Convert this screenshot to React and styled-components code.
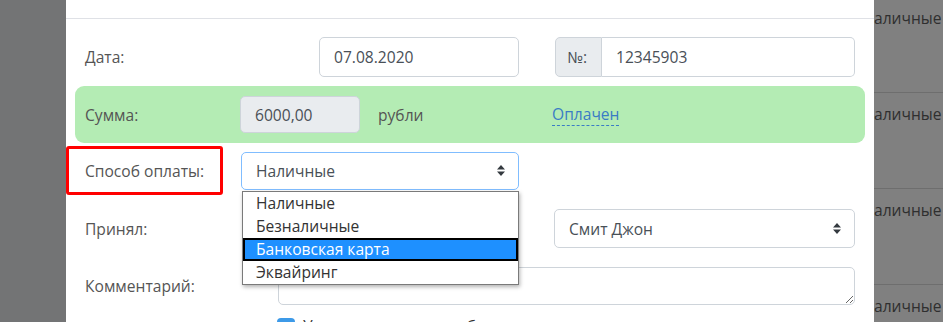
import React from "react";
import styled, { createGlobalStyle } from "styled-components";

const Global = createGlobalStyle`
  html, body { margin: 0; padding: 0; height: 322px; overflow: hidden; background: #808080; }
  body { font-family: "Open Sans", "Noto Sans", sans-serif; font-size: 15.6px; }
  * { box-sizing: border-box; }
`;

const Page = styled.div`
  display: flex;
  align-items: flex-start;
  width: 943px;
  height: 322px;
  overflow: hidden;
`;

const LeftShade = styled.div`
  width: 66px;
  height: 322px;
  flex: none;
  background: #737475;
`;

const RightShade = styled.div`
  flex: 1;
  background: #808080;
  overflow: hidden;
  margin-top: -3px;
`;

const ShadeRow = styled.div`
  height: 96px;
  border-bottom: 1px solid #6e6e6e;
  padding-top: 9px;
  line-height: 24px;
  color: #2f2f2f;
  white-space: nowrap;
`;

const Modal = styled.div`
  width: 808px;
  flex: none;
  background: #fff;
  min-height: 340px;
`;

const Header = styled.div`
  height: 19px;
  border-bottom: 1px solid #dfe1e6;
`;

const Body = styled.div`
  padding: 18px 19px 0 19px;
  display: flex;
  flex-direction: column;
`;

const Row = styled.div`
  display: flex;
  align-items: center;
  margin-top: ${(p) => p.$mt || 0}px;
`;

const Label = styled.div`
  width: ${(p) => p.$w}px;
  flex: none;
  color: #555;
  line-height: 24px;
`;

const Input = styled.div`
  width: ${(p) => (p.$w ? `${p.$w}px` : "auto")};
  flex: ${(p) => (p.$w ? "none" : 1)};
  height: ${(p) => p.$h || 40}px;
  border: 1px solid #ced4da;
  border-radius: 5px;
  background: ${(p) => (p.$disabled ? "#e9ecef" : "#fff")};
  color: #495057;
  display: flex;
  align-items: center;
  padding-left: 14px;
  line-height: 24px;
`;

const Group = styled.div`
  flex: 1;
  display: flex;
  height: 40px;
  margin-left: 36px;
`;

const Addon = styled.div`
  width: 47px;
  flex: none;
  border: 1px solid #ced4da;
  border-radius: 5px 0 0 5px;
  background: #e9ecef;
  color: #495057;
  display: flex;
  align-items: center;
  padding-left: 11px;
`;

const GroupInput = styled(Input)`
  border-left: none;
  border-radius: 0 5px 5px 0;
  padding-left: 14px;
  height: 40px;
`;

const Panel = styled.div`
  margin: 9px -10px 0 -10px;
  background: #b4ecb4;
  border-radius: 9px;
  padding: 10px 10px;
  display: flex;
  align-items: center;
`;

const Plain = styled.div`
  width: ${(p) => p.$w}px;
  flex: none;
  margin-left: ${(p) => p.$ml || 0}px;
  color: #555;
  line-height: 24px;
`;

const StatusLink = styled.span`
  color: #3a7cc5;
  border-bottom: 1px dashed #3a7cc5;
  line-height: 21px;
  display: inline-block;
`;

const MarkedLabel = styled.div`
  width: 157px;
  height: 49px;
  flex: none;
  margin-left: -19px;
  border: 3px solid #ff0000;
  border-radius: 3px;
  padding-left: 16px;
  display: flex;
  align-items: center;
  color: #555;
`;

const SelectWrap = styled.div`
  position: relative;
  width: ${(p) => (p.$w ? `${p.$w}px` : "auto")};
  flex: ${(p) => (p.$w ? "none" : 1)};
  margin-left: ${(p) => p.$ml || 0}px;
`;

const SelectBox = styled.div`
  height: ${(p) => p.$h}px;
  border: 1px solid ${(p) => (p.$focus ? "#80bdff" : "#ced4da")};
  border-radius: 5px;
  background: #fff;
  color: #495057;
  display: flex;
  align-items: center;
  justify-content: space-between;
  padding: 0 13px 0 14px;
`;

const Options = styled.div`
  position: absolute;
  top: 100%;
  left: 1px;
  right: 0;
  margin-top: 1px;
  background: #fff;
  border: 1px solid #7a7a7a;
  box-shadow: 1px 2px 4px rgba(0, 0, 0, 0.3);
  z-index: 5;
`;

const Option = styled.div`
  height: 23px;
  line-height: 23px;
  padding-left: 13px;
  color: ${(p) => (p.$active ? "#fff" : "#333")};
  background: ${(p) => (p.$active ? "#1e90ff" : "#fff")};
  box-shadow: ${(p) => (p.$active ? "inset 0 0 0 2px #000" : "none")};
`;

const TextArea = styled.textarea`
  flex: 1;
  height: 38px;
  border: 1px solid #ced4da;
  border-radius: 5px;
  resize: vertical;
  font: inherit;
  margin: 0;
  outline: none;
`;

const CheckRow = styled.div`
  display: flex;
  align-items: flex-start;
  gap: 8px;
  padding-left: 192px;
  margin-top: 13px;
  color: #333;
`;

const CheckBox = styled.div`
  width: 18px;
  height: 18px;
  flex: none;
  border-radius: 4px;
  background: #3d9ae8;
`;

const CheckText = styled.span`
  line-height: 16px;
`;

const Arrows = () => (
  <svg width="8" height="11" viewBox="0 0 8 11">
    <path d="M4 0 L8 4.5 L0 4.5 Z M0 6.5 L8 6.5 L4 11 Z" fill="#343a40" />
  </svg>
);

export default function App() {
  return (
    <>
      <Global />
      <Page>
        <LeftShade />
        <Modal>
          <Header />
          <Body>
            <Row>
              <Label $w={234}>Дата:</Label>
              <Input $w={200}>07.08.2020</Input>
              <Group>
                <Addon>№:</Addon>
                <GroupInput>12345903</GroupInput>
              </Group>
            </Row>
            <Panel>
              <Label $w={155}>Сумма:</Label>
              <Input $w={120} $h={37} $disabled>
                6000,00
              </Input>
              <Plain $w={174} $ml={18}>рубли</Plain>
              <StatusLink>Оплачен</StatusLink>
            </Panel>
            <Row $mt={3}>
              <MarkedLabel>Способ оплаты:</MarkedLabel>
              <SelectWrap $w={278} $ml={18}>
                <SelectBox $h={38} $focus>
                  <span>Наличные</span>
                  <Arrows />
                </SelectBox>
                <Options>
                  <Option>Наличные</Option>
                  <Option>Безналичные</Option>
                  <Option $active>Банковская карта</Option>
                  <Option>Эквайринг</Option>
                </Options>
              </SelectWrap>
            </Row>
            <Row $mt={14}>
              <Label $w={469}>Принял:</Label>
              <SelectWrap>
                <SelectBox $h={39}>
                  <span>Смит Джон</span>
                  <Arrows />
                </SelectBox>
              </SelectWrap>
            </Row>
            <Row $mt={19}>
              <Label $w={193}>Комментарий:</Label>
              <TextArea />
            </Row>
            <CheckRow>
              <CheckBox />
              <CheckText>Учитывать в расчете баланса</CheckText>
            </CheckRow>
          </Body>
        </Modal>
        <RightShade>
          {[0, 1, 2, 3].map((i) => (
            <ShadeRow key={i}>аличные</ShadeRow>
          ))}
        </RightShade>
      </Page>
    </>
  );
}
